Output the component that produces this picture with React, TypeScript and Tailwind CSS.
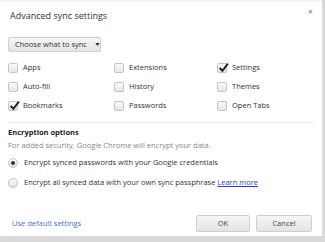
import React from "react";

const font = { fontFamily: '"Open Sans", "Noto Sans", sans-serif' };

function Check({ checked, label }: { checked?: boolean; label: string }) {
  return (
    <div className="flex h-[19px] items-center">
      <span className="relative h-[10px] w-[10px] rounded-[2px] border border-[#c4c4c4] bg-gradient-to-b from-[#fafafa] to-[#e6e6e6]">
        {checked && (
          <svg viewBox="0 0 10 10" className="absolute left-[0px] top-[-2px] h-[11px] w-[11px]">
            <path d="M1.5 5.5 L4 8 L9 1.5" fill="none" stroke="#222" strokeWidth="1.8" />
          </svg>
        )}
      </span>
      <span className="ml-[5px] text-[7.5px] text-[#333]">{label}</span>
    </div>
  );
}

function Radio({ checked, children }: { checked?: boolean; children: React.ReactNode }) {
  return (
    <div className="flex h-[20px] items-center">
      <span className="flex h-[10px] w-[10px] items-center justify-center rounded-full border border-[#c4c4c4] bg-gradient-to-b from-[#fafafa] to-[#e2e2e2]">
        {checked && <span className="h-[4px] w-[4px] rounded-full bg-[#333]" />}
      </span>
      <span className="ml-[6px] text-[7.5px] text-[#333]">{children}</span>
    </div>
  );
}

export default function App() {
  return (
    <div className="h-[242px] w-[325px] overflow-hidden bg-[#d9d9d9]" style={font}>
      <div className="h-[2px] w-[322px] bg-[#f4f4f4]" />
      <div className="relative flex h-[234px] w-[322px] flex-col bg-white px-[8px]">
        <span className="absolute right-[9px] top-[5px] text-[9px] leading-none text-[#777]">×</span>
        <div className="ml-[2px] pt-[7px] text-[9px] leading-[13px] text-[#333]">Advanced sync settings</div>
        <div className="mt-[15px] flex h-[15px] w-[93px] items-center whitespace-nowrap rounded-[2px] border border-[#cfcfcf] bg-gradient-to-b from-[#f6f6f6] to-[#e4e4e4] pl-[6px]">
          <span className="text-[7.5px] text-[#333]">Choose what to sync</span>
          <svg viewBox="0 0 6 4" className="ml-[8px] h-[3px] w-[5px]">
            <path d="M0 0 L6 0 L3 4 Z" fill="#333" />
          </svg>
        </div>
        <div className="mt-[6px] grid grid-cols-[106px_103px_1fr]">
          <Check label="Apps" />
          <Check label="Extensions" />
          <Check checked label="Settings" />
          <Check label="Auto-fill" />
          <Check label="History" />
          <Check label="Themes" />
          <Check checked label="Bookmarks" />
          <Check label="Passwords" />
          <Check label="Open Tabs" />
        </div>
        <div className="mt-[7px] h-px w-[306px] bg-[#e8e8e8]" />
        <div className="mt-[3px] text-[7.5px] font-bold leading-[12px] text-[#222]">Encryption options</div>
        <div className="mt-[1px] text-[7.5px] leading-[12px] text-[#888]">
          For added security, Google Chrome will encrypt your data.
        </div>
        <div className="mt-[2px]">
          <Radio checked>Encrypt synced passwords with your Google credentials</Radio>
          <Radio>
            Encrypt all synced data with your own sync passphrase{" "}
            <span className="text-[#2a3fc0] underline">Learn more</span>
          </Radio>
        </div>
        <div className="mt-auto mb-[4px] flex items-center">
          <span className="ml-[4px] text-[7.5px] text-[#4a6fc8]">Use default settings</span>
          <div className="ml-auto flex gap-[6px] pr-[2px]">
            <div className="flex h-[17px] w-[54px] items-center justify-center rounded-[2px] border border-[#cfcfcf] bg-gradient-to-b from-[#f6f6f6] to-[#e4e4e4] text-[7.5px] text-[#444]">
              OK
            </div>
            <div className="flex h-[17px] w-[56px] items-center justify-center rounded-[2px] border border-[#cfcfcf] bg-gradient-to-b from-[#f6f6f6] to-[#e4e4e4] text-[7.5px] text-[#444]">
              Cancel
            </div>
          </div>
        </div>
      </div>
    </div>
  );
}
